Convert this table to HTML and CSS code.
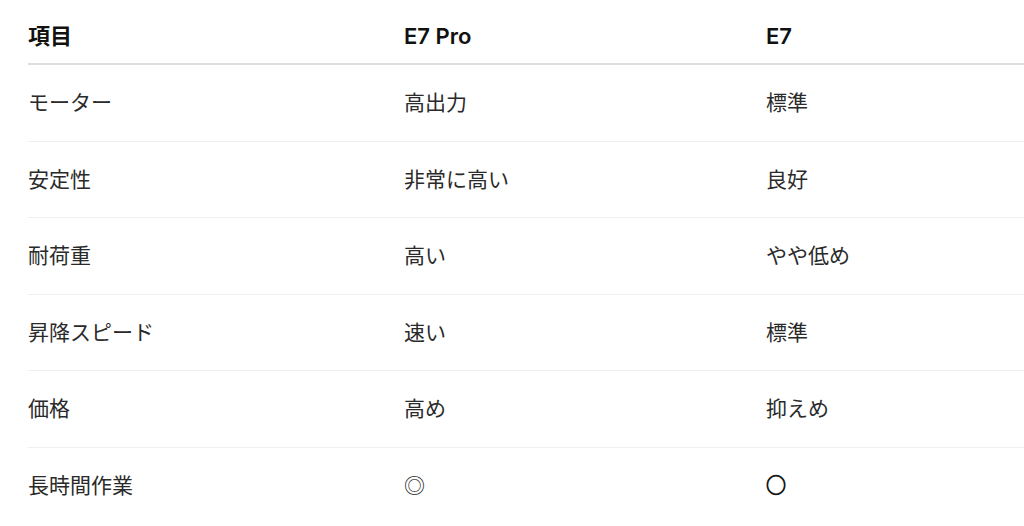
FILE: index.html
```html
<!DOCTYPE html>
<html lang="ja">
<head>
<meta charset="utf-8">
<title>E7 Pro と E7 の比較</title>
<link rel="stylesheet" href="styles.css">
</head>
<body>
<div class="wrap">
  <table class="spec">
    <colgroup>
      <col class="c1">
      <col class="c2">
      <col class="c3">
    </colgroup>
    <thead>
      <tr><th>項目</th><th>E7 Pro</th><th>E7</th></tr>
    </thead>
    <tbody>
      <tr><td>モーター</td><td>高出力</td><td>標準</td></tr>
      <tr><td>安定性</td><td>非常に高い</td><td>良好</td></tr>
      <tr><td>耐荷重</td><td>高い</td><td>やや低め</td></tr>
      <tr><td>昇降スピード</td><td>速い</td><td>標準</td></tr>
      <tr><td>価格</td><td>高め</td><td>抑えめ</td></tr>
      <tr><td>長時間作業</td><td>◎</td><td><span class="mark-bold">○</span></td></tr>
    </tbody>
  </table>
</div>
</body>
</html>
```

FILE: styles.css
```css
html, body {
  margin: 0;
  padding: 0;
  background: #ffffff;
}

body {
  font-family: "Inter", "Noto Sans CJK JP", sans-serif;
  color: #2a2a2a;
  font-size: 21px;
}

.wrap {
  padding-left: 28px;
  overflow: hidden;
}

.spec {
  width: 996px;
  border-collapse: collapse;
  table-layout: fixed;
}

.c1 { width: 376px; }
.c2 { width: 362px; }
.c3 { width: auto; }

.spec th {
  text-align: left;
  font-weight: 600;
  font-size: 22px;
  color: #111111;
  line-height: 33px;
  padding: 20px 0 10px;
  border-bottom: 2px solid #dedede;
}

.spec td {
  text-align: left;
  line-height: 1.6;
  padding: 21px 0;
  border-bottom: 1px solid #efefef;
}

.spec tbody tr:last-child td {
  border-bottom: none;
}

.mark-bold {
  font-family: "Noto Sans CJK JP", sans-serif;
  font-size: 20px;
  color: #1a1a1a;
  -webkit-text-stroke: 0.9px #1a1a1a;
}
```
